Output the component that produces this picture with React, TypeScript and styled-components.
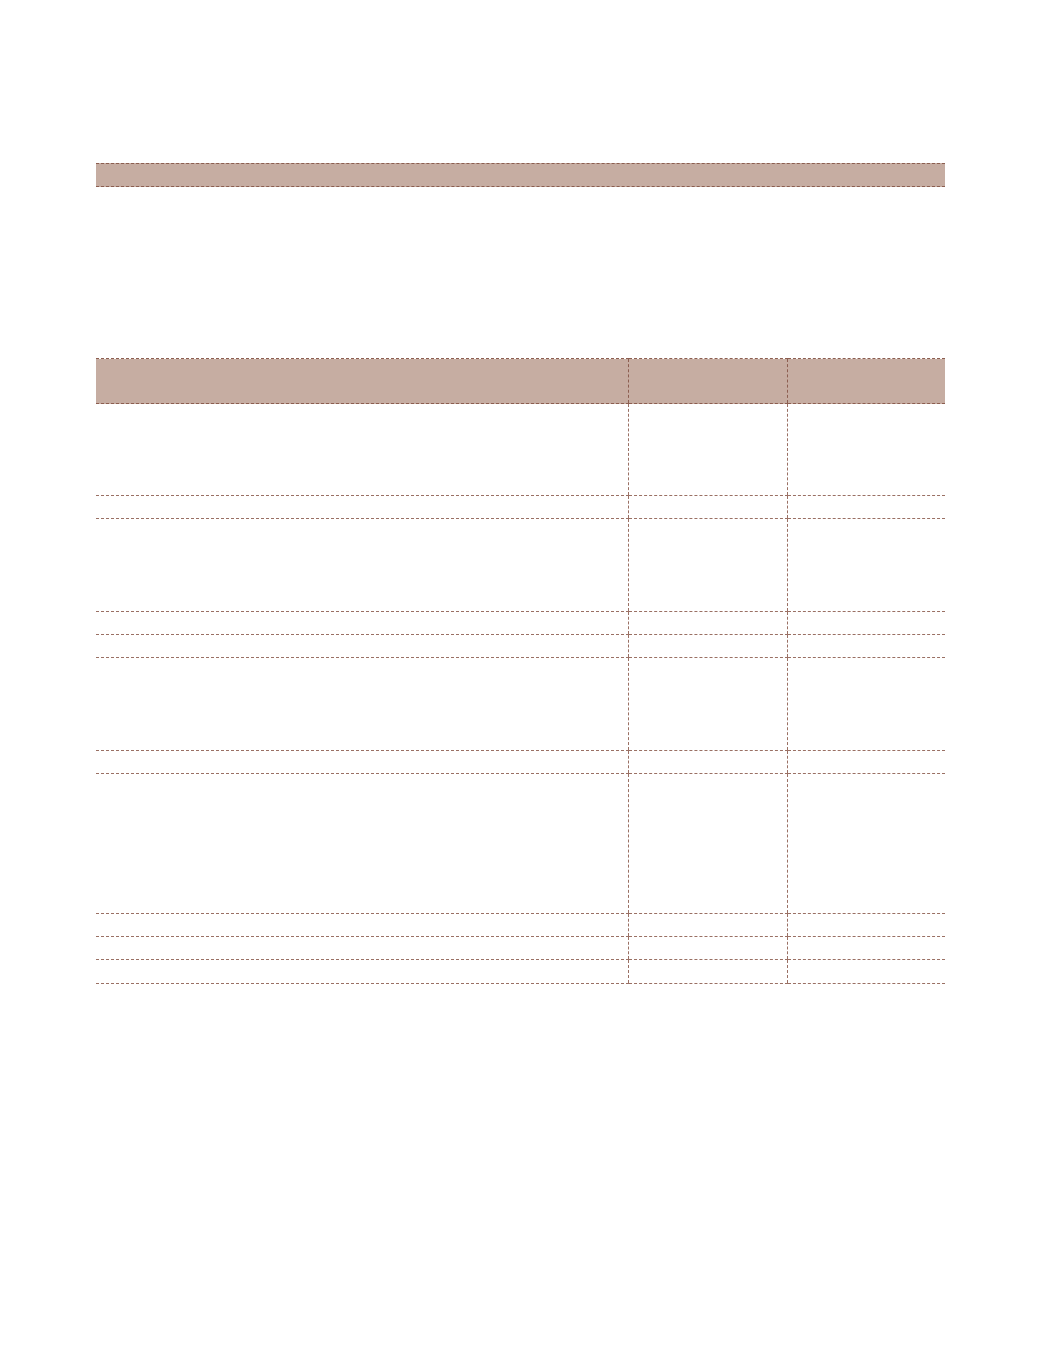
import styled, { createGlobalStyle } from 'styled-components'

const GlobalStyle = createGlobalStyle`
  html, body {
    margin: 0;
    padding: 0;
    background: #fff;
    font-family: "Liberation Sans", Arial, sans-serif;
  }
`

const Page = styled.div`
  width: 1039px;
  height: 1353px;
  box-sizing: border-box;
  padding: 163px 94px 0 96px;
`

const TitleBar = styled.div`
  height: 22px;
  background: #c6ada2;
  border-top: 1px dashed #8c5e50;
  border-bottom: 1px dashed #8c5e50;
`

const Table = styled.table`
  margin-top: 171px;
  width: 849px;
  border-collapse: collapse;
  table-layout: fixed;
`

const HeadCell = styled.th`
  height: 44px;
  padding: 0;
  background: #c6ada2;
  border-top: 1px dashed #8c5e50;
  border-bottom: 1px dashed #8c5e50;
  border-left: 1px dashed #8c5e50;

  &:first-child {
    border-left: none;
  }
`

interface RowProps {
  h: number
}

const Row = styled.tr<RowProps>`
  height: ${(props) => props.h}px;
`

const Cell = styled.td`
  padding: 0;
  border-bottom: 1px dashed #9a7064;
  border-left: 1px dashed #9a7064;

  &:first-child {
    border-left: none;
  }
`

const rows = [92, 23, 93, 23, 23, 93, 23, 140, 23, 23, 24]

export default function App() {
  return (
    <>
      <GlobalStyle />
      <Page>
        <TitleBar />
        <Table>
          <colgroup>
            <col style={{ width: 532 }} />
            <col style={{ width: 159 }} />
            <col style={{ width: 158 }} />
          </colgroup>
          <thead>
            <tr>
              <HeadCell />
              <HeadCell />
              <HeadCell />
            </tr>
          </thead>
          <tbody>
            {rows.map((h, idx) => (
              <Row h={h} key={idx}>
                <Cell />
                <Cell />
                <Cell />
              </Row>
            ))}
          </tbody>
        </Table>
      </Page>
    </>
  )
}
